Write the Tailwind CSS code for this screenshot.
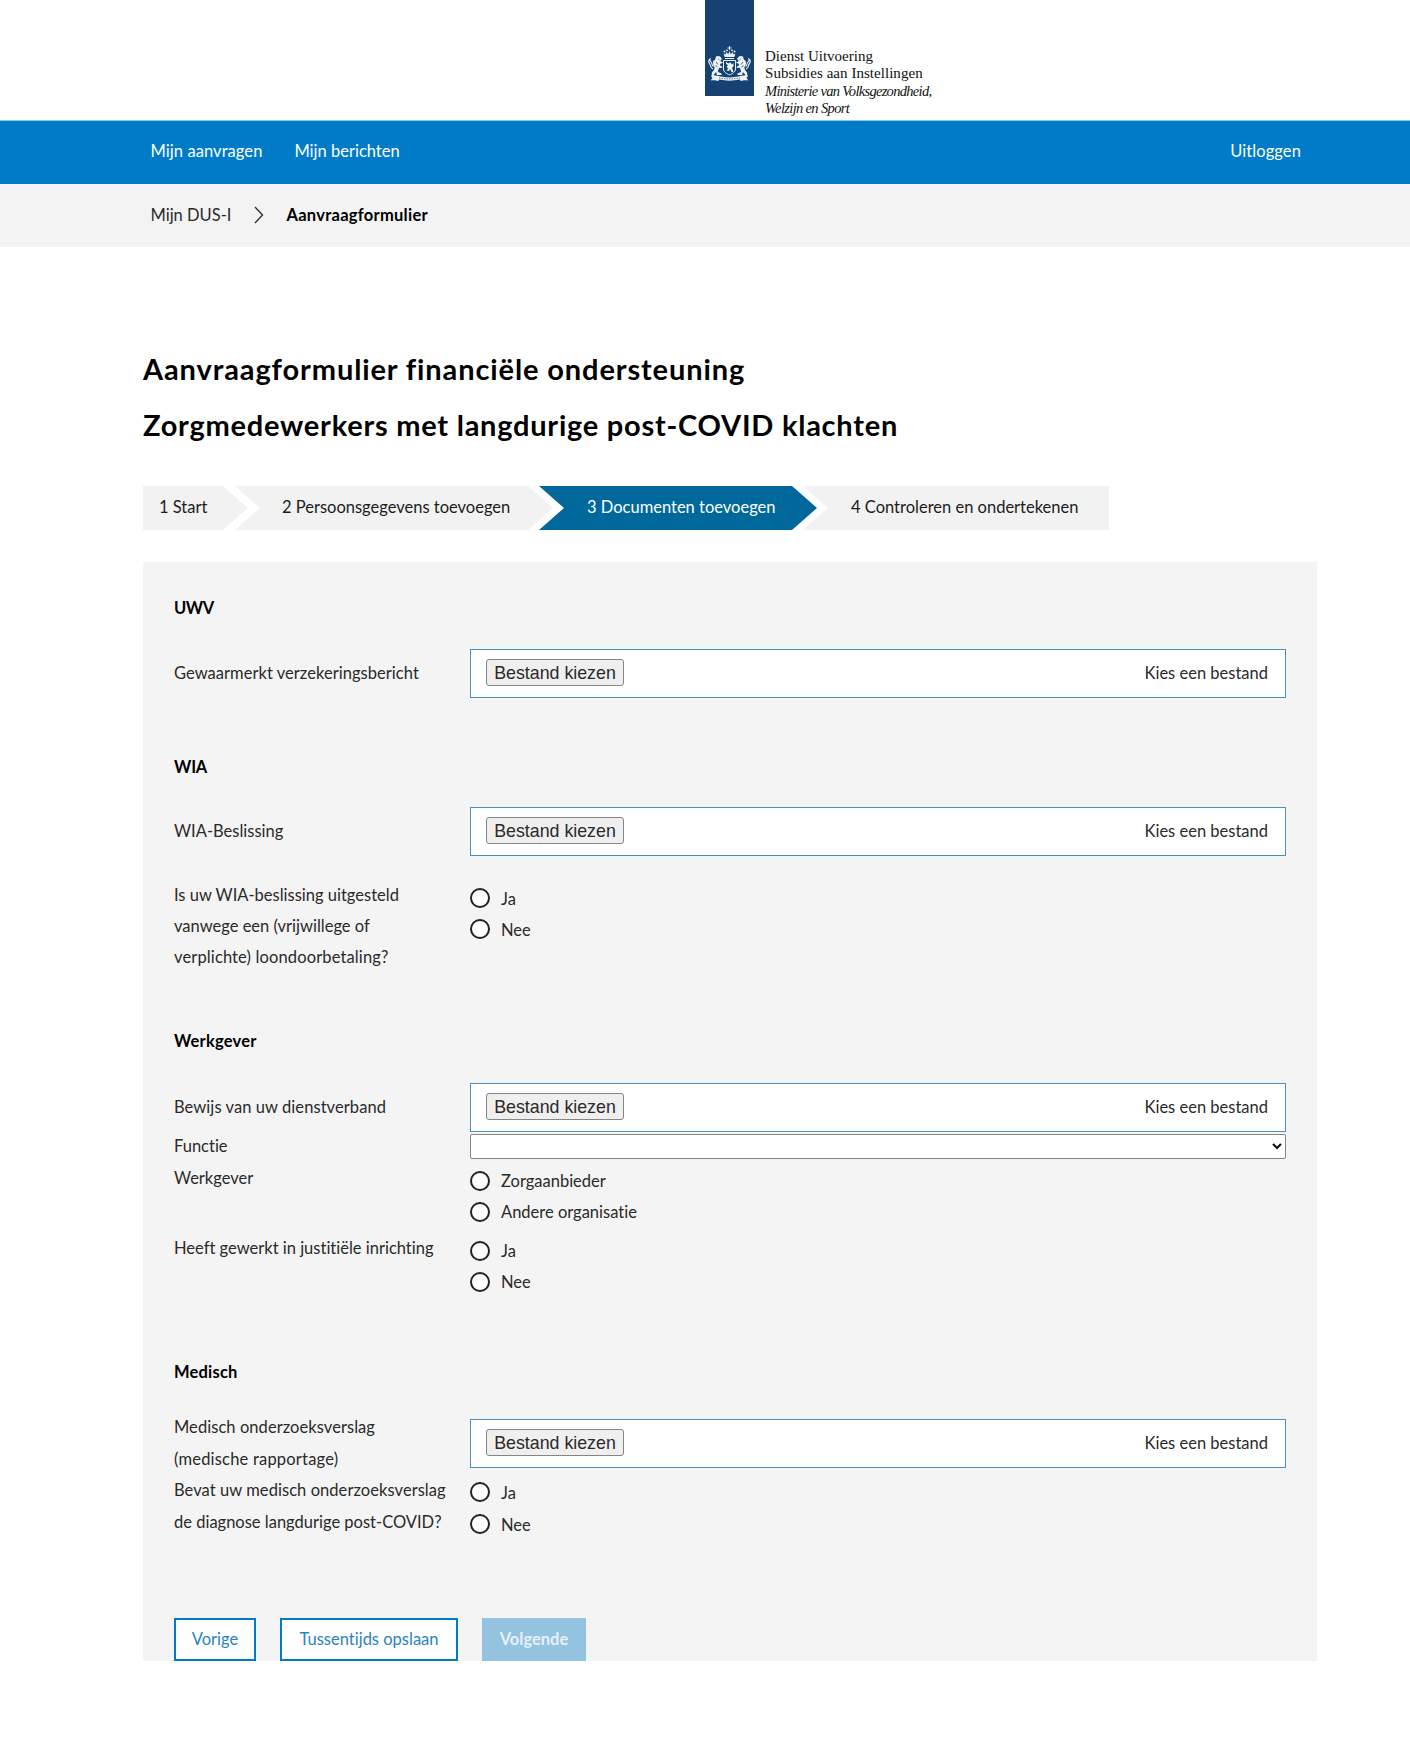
<!DOCTYPE html>
<html lang="nl">
<head>
<meta charset="utf-8">
<title>Aanvraagformulier - Mijn DUS-I</title>
<script src="https://cdn.jsdelivr.net/npm/@tailwindcss/browser@4"></script>
</head>
<body class="bg-white font-['Lato',sans-serif] [font-variant-ligatures:none] text-[16.5px] leading-[31px] text-[#2a2a2a] w-[1410px] min-h-[1746px]">

<header class="flex h-[120px] pl-[705px]">
  <div class="w-[49px] h-24 bg-[#154273] pt-[46px] pl-[3px]">
    <svg width="43" height="37" viewBox="0 0 43 37" fill="#eef3f8" stroke="none">
      <!-- crown -->
      <path d="M21 0h1v1.500h1.500v1H22V4h-1V2.500h-1.500v-1H21z"/>
      <circle cx="16.500" cy="5.500" r="1"/><circle cx="26.500" cy="5.500" r="1"/><circle cx="19" cy="4.300" r=".9"/><circle cx="24" cy="4.300" r=".9"/>
      <path d="M15.500 7.500l2 1 1.200-2.500 1.500 2.500 1.300-3.500 1.300 3.500 1.500-2.500 1.200 2.500 2-1-1.200 3.500h-9.600z"/>
      <path d="M17 12h9v1h-9z"/>
      <!-- shield -->
      <path d="M15.500 14.500h12V23c0 3-3 4.500-6 6-3-1.500-6-3-6-6z" fill="none" stroke="#eef3f8"/>
      <path d="M18 16v2l2 1-1.500 2 1.500 1-1 3h2l1-2 1.500 3h2l-1.500-4.500 1.500-1V17l-1.500 1.500L22 16l-1 1.500z"/>
      <!-- lions -->
      <g id="lion">
        <path d="M8 10.500c2-1.200 4.500-.5 5 1.300l1.200 1.200-1.700 1 .5 2 1.500-.5v1.500l-2.500 1 .5 2 1.700.5V22l-3-.3c-.5 1.800-1.500 3-1.200 4.300l3.500 1.500v1.500H8.800l-.6-3-2.400 2.500.5 1.500H3.500L4 26.500c1-2 3-3 2.500-5.500-1.500-2-2-4-1-6.500L7 14z"/>
        <path d="M5 23c-3-1-2-4-3.500-5.500C.3 16.300.5 14 2 13c-.3 1.500 0 2.300 1 3 1.500 1 .5 3.500 2.500 4.500" fill="none" stroke="#eef3f8" stroke-width="1.100"/>
        <path d="M10.500 13l1 .8M8 16l2 2.500M7.500 19.500l2 1.500" stroke="#154273" stroke-width=".8"/>
      </g>
      <use href="#lion" transform="translate(43 0) scale(-1 1)"/>
      <!-- ribbon -->
      <path d="M3 30c6-1.500 9 1.500 18.500 1.500S34 28.500 40 30l-1.500 2 2 2.500c-4-.5-6 .2-8 .6l-.5-1.600c-7 1.500-14 1.500-21 0l-.5 1.600c-2-.4-4-1.100-8-.6l2-2.500z"/>
      <path d="M11 31.800c7 1.500 14 1.500 21 0" fill="none" stroke="#154273" stroke-width=".7" stroke-dasharray="1.500 1"/>
    </svg>
  </div>
  <div class="pt-[47.5px] pl-[11px] font-['Liberation_Serif',serif] text-[15px] leading-[17.5px] text-[#111] whitespace-nowrap">
    <p>Dienst Uitvoering</p>
    <p class="tracking-[0.04px]">Subsidies aan Instellingen</p>
    <p class="italic text-[14.5px] tracking-[-0.7px]">Ministerie van Volksgezondheid,</p>
    <p class="italic text-[14.5px] tracking-[-0.65px]">Welzijn en Sport</p>
  </div>
</header>

<nav class="flex items-center h-16 border-t border-[#8ec6ea] bg-[#007bc7] text-white pl-[150.5px] pr-[109px] pb-[2px]">
  <a class="tracking-[0.07px]">Mijn aanvragen</a>
  <a class="ml-8">Mijn berichten</a>
  <a class="ml-auto tracking-[0.1px]">Uitloggen</a>
</nav>
<div class="flex items-center h-[63px] bg-[#f3f3f3] pl-[150.5px] pb-[1px]">
  <span>Mijn DUS-I</span>
  <svg class="ml-[22.500px] mr-[22.500px]" width="10" height="18" viewBox="0 0 10 18" fill="none" stroke="#333" stroke-width="1.400"><path d="M1 1l7.500 8L1 17"/></svg>
  <strong class="text-black tracking-[0.27px]">Aanvraagformulier</strong>
</div>

<main class="pl-[143px] pt-[94px]">
  <h1 class="text-[29px] leading-14 font-bold text-black whitespace-nowrap">
    <span class="block tracking-[0.88px]">Aanvraagformulier financiële ondersteuning</span>
    <span class="block tracking-[0.75px]">Zorgmedewerkers met langdurige post-COVID klachten</span>
  </h1>

  <ol class="flex mt-[33px] h-11 leading-[43px] text-[#1c1c1c] whitespace-nowrap">
    <li class="w-[105px] pl-[16px] bg-[#f2f2f2] [clip-path:polygon(0_0,calc(100%_-_25px)_0,100%_50%,calc(100%_-_25px)_100%,0_100%)]">1 Start</li>
    <li class="w-[318px] -ml-[13px] pl-[47px] bg-[#f2f2f2] [clip-path:polygon(0_0,calc(100%_-_25px)_0,100%_50%,calc(100%_-_25px)_100%,0_100%,25px_50%)]">2 Persoonsgegevens toevoegen</li>
    <li class="w-[278px] -ml-[14px] pl-[48px] bg-[#01689b] text-white [clip-path:polygon(0_0,calc(100%_-_25px)_0,100%_50%,calc(100%_-_25px)_100%,0_100%,25px_50%)]">3 Documenten toevoegen</li>
    <li class="w-[306px] -ml-[14px] pl-[48px] bg-[#f2f2f2] [clip-path:polygon(0_0,100%_0,100%_100%,0_100%,25px_50%)]">4 Controleren en ondertekenen</li>
  </ol>

  <form class="mt-8 w-[1174px] bg-[#f4f4f4] pt-[31px] pl-[31px] pr-[31px]">

    <h2 class="h-[30px] leading-[30px] font-bold text-black tracking-[-0.4px]">UWV</h2>
    <div class="grid grid-cols-[296px_816px] mt-[26px]">
      <label class="self-center tracking-[0.04px]">Gewaarmerkt verzekeringsbericht</label>
      <div class="flex items-center justify-between h-[49px] border border-[#4a90bd] bg-white pl-[15px] pr-[17px]">
        <button type="button" class="mb-[2px] w-[138px] h-[27px] rounded-[3px] border border-[#858585] bg-[#efefef] font-['Liberation_Sans',sans-serif] text-[17.800px] leading-[24px]">Bestand kiezen</button>
        <span>Kies een bestand</span>
      </div>
    </div>

    <h2 class="h-[30px] leading-[30px] mt-[54px] font-bold text-black tracking-[-0.2px]">WIA</h2>
    <div class="grid grid-cols-[296px_816px] mt-[25px]">
      <label class="self-center">WIA-Beslissing</label>
      <div class="flex items-center justify-between h-[49px] border border-[#4a90bd] bg-white pl-[15px] pr-[17px]">
        <button type="button" class="mb-[2px] w-[138px] h-[27px] rounded-[3px] border border-[#858585] bg-[#efefef] font-['Liberation_Sans',sans-serif] text-[17.800px] leading-[24px]">Bestand kiezen</button>
        <span>Kies een bestand</span>
      </div>
    </div>
    <div class="grid grid-cols-[296px_816px] mt-6">
      <p>Is uw WIA-beslissing uitgesteld<br>vanwege een (vrijwillege of<br><span class="tracking-[0.13px]">verplichte) loondoorbetaling?</span></p>
      <div class="pt-[4px]">
        <label class="flex items-center gap-[11px]"><i class="mb-[4px] size-5 rounded-full border-2 border-[#222] bg-white"></i>Ja</label>
        <label class="flex items-center gap-[11px]"><i class="mb-[4px] size-5 rounded-full border-2 border-[#222] bg-white"></i>Nee</label>
      </div>
    </div>

    <h2 class="h-[30px] leading-[30px] mt-[53px] font-bold text-black tracking-[0.2px]">Werkgever</h2>
    <div class="grid grid-cols-[296px_816px] mt-[27px]">
      <label class="self-center tracking-[0.07px]">Bewijs van uw dienstverband</label>
      <div class="flex items-center justify-between h-[49px] border border-[#4a90bd] bg-white pl-[15px] pr-[17px]">
        <button type="button" class="mb-[2px] w-[138px] h-[27px] rounded-[3px] border border-[#858585] bg-[#efefef] font-['Liberation_Sans',sans-serif] text-[17.800px] leading-[24px]">Bestand kiezen</button>
        <span>Kies een bestand</span>
      </div>
    </div>
    <div class="grid grid-cols-[296px_816px] mt-[2px] h-[25px]">
      <label class="leading-[25px]">Functie</label>
      <div class="flex items-center justify-end h-[25px] border border-[#858585] rounded-[2px] bg-white pr-[3px]">
        <svg width="10" height="7" viewBox="0 0 10 7" fill="none" stroke="#111" stroke-width="2.200"><path d="M1 1l4 4 4-4"/></svg>
      </div>
    </div>
    <div class="grid grid-cols-[296px_816px] mt-[4px]">
      <p>Werkgever</p>
      <div class="pt-[3px]">
        <label class="flex items-center gap-[11px]"><i class="mb-[2px] size-5 rounded-full border-2 border-[#222] bg-white"></i>Zorgaanbieder</label>
        <label class="flex items-center gap-[11px]"><i class="mb-[2px] size-5 rounded-full border-2 border-[#222] bg-white"></i>Andere organisatie</label>
      </div>
    </div>
    <div class="grid grid-cols-[296px_816px] mt-[5px]">
      <p>Heeft gewerkt in justitiële inrichting</p>
      <div class="pt-[3px]">
        <label class="flex items-center gap-[11px]"><i class="mb-[2px] size-5 rounded-full border-2 border-[#222] bg-white"></i>Ja</label>
        <label class="flex items-center gap-[11px]"><i class="mb-[2px] size-5 rounded-full border-2 border-[#222] bg-white"></i>Nee</label>
      </div>
    </div>

    <h2 class="h-[30px] leading-[30px] mt-[59px] font-bold text-black tracking-[0.2px]">Medisch</h2>
    <div class="grid grid-cols-[296px_816px] mt-[25px] h-[63px]">
      <p class="leading-[31.500px] tracking-[0.06px]">Medisch onderzoeksverslag<br><span class="tracking-[0.2px]">(medische rapportage)</span></p>
      <div class="flex items-center justify-between h-[49px] mt-[7px] border border-[#4a90bd] bg-white pl-[15px] pr-[17px]">
        <button type="button" class="mb-[2px] w-[138px] h-[27px] rounded-[3px] border border-[#858585] bg-[#efefef] font-['Liberation_Sans',sans-serif] text-[17.800px] leading-[24px]">Bestand kiezen</button>
        <span>Kies een bestand</span>
      </div>
    </div>
    <div class="grid grid-cols-[296px_816px] h-[63px]">
      <p class="whitespace-nowrap leading-[31.500px]"><span class="tracking-[0.06px]">Bevat uw medisch onderzoeksverslag</span><br>de diagnose langdurige post-COVID?</p>
      <div class="pt-[2px] leading-[32px]">
        <label class="flex items-center gap-[11px]"><i class="mb-[2px] size-5 rounded-full border-2 border-[#222] bg-white"></i>Ja</label>
        <label class="flex items-center gap-[11px]"><i class="mb-[2px] size-5 rounded-full border-2 border-[#222] bg-white"></i>Nee</label>
      </div>
    </div>

    <div class="flex gap-6 mt-[80px] h-[43px] leading-[39px]">
      <button type="button" class="w-[82px] border-2 border-[#007bc7] bg-white pb-[1px] text-[#2b83bf]">Vorige</button>
      <button type="button" class="w-[178px] border-2 border-[#007bc7] bg-white pb-[1px] text-[#2b83bf]">Tussentijds opslaan</button>
      <button type="button" class="w-[104px] bg-[#94c2e1] pb-[1px] font-bold text-[#e6f1f9]">Volgende</button>
    </div>
  </form>
</main>
</body>
</html>
